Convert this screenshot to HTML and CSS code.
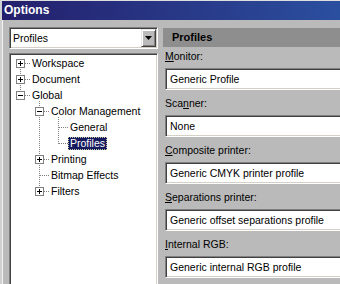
FILE: index.html
```html
<!DOCTYPE html>
<html lang="en">
<head>
  <meta charset="UTF-8">
  <title>Options</title>
  <link rel="stylesheet" href="styles.css">
</head>
<body>
  <div class="window">
    <div class="titlebar">Options</div>

    <div class="main">
      <!-- left: category picker + tree -->
      <div class="sidebar">
        <div class="combo">
          <span class="combo-value">Profiles</span>
          <span class="combo-button"><span class="arrow"></span></span>
        </div>

        <div class="tree">
          <svg class="tree-lines" width="146" height="150" viewBox="0 0 146 150">
            <g stroke="#808080" stroke-width="1" stroke-dasharray="1 1" shape-rendering="crispEdges" fill="none">
              <line x1="9.5" y1="8" x2="9.5" y2="41" />
              <line x1="28.5" y1="46" x2="28.5" y2="137" />
              <line x1="47.5" y1="62" x2="47.5" y2="89" />
              <line x1="14" y1="8.5" x2="19" y2="8.5" />
              <line x1="14" y1="24.5" x2="19" y2="24.5" />
              <line x1="14" y1="40.5" x2="19" y2="40.5" />
              <line x1="33" y1="56.5" x2="38" y2="56.5" />
              <line x1="48" y1="72.5" x2="57" y2="72.5" />
              <line x1="48" y1="88.5" x2="57" y2="88.5" />
              <line x1="33" y1="104.5" x2="38" y2="104.5" />
              <line x1="29" y1="120.5" x2="38" y2="120.5" />
              <line x1="33" y1="136.5" x2="38" y2="136.5" />
            </g>
          </svg>
          <div class="rows">
            <div class="row level-0"><span class="expander plus"></span><span class="label">Workspace</span></div>
            <div class="row level-0"><span class="expander plus"></span><span class="label">Document</span></div>
            <div class="row level-0"><span class="expander"></span><span class="label">Global</span></div>
            <div class="row level-1"><span class="expander"></span><span class="label">Color Management</span></div>
            <div class="row level-2"><span class="leaf"></span><span class="label">General</span></div>
            <div class="row level-2"><span class="leaf"></span><span class="label selected">Profiles</span></div>
            <div class="row level-1"><span class="expander plus"></span><span class="label">Printing</span></div>
            <div class="row level-1"><span class="leaf"></span><span class="label">Bitmap Effects</span></div>
            <div class="row level-1"><span class="expander plus"></span><span class="label">Filters</span></div>
          </div>
        </div>
      </div>

      <!-- right: profile settings -->
      <div class="panel">
        <div class="panel-header">Profiles</div>
        <div class="fields">
          <div class="field-label"><u>M</u>onitor:</div>
          <div class="field">Generic Profile</div>

          <div class="field-label">Sca<u>n</u>ner:</div>
          <div class="field">None</div>

          <div class="field-label"><u>C</u>omposite printer:</div>
          <div class="field">Generic CMYK printer profile</div>

          <div class="field-label"><u>S</u>eparations printer:</div>
          <div class="field">Generic offset separations profile</div>

          <div class="field-label"><u>I</u>nternal RGB:</div>
          <div class="field">Generic internal RGB profile</div>
        </div>
      </div>
    </div>
  </div>
</body>
</html>
```

FILE: styles.css
```css
* {
  margin: 0;
  padding: 0;
  box-sizing: border-box;
}
body {
  width: 340px;
  height: 284px;
  overflow: hidden;
  background-color: #bababa;
  font-family: 'Liberation Sans', Arial, sans-serif;
  font-size: 10.5px;
  color: #000;
}
.window {
  height: 284px;
  border-top: 1px solid #dedede;
  border-left: 2px solid #d0d0d0;
  overflow: hidden;
}
.titlebar {
  height: 19px;
  line-height: 19px;
  padding-left: 2px;
  background: linear-gradient(to right, #241f6c, #2b4f9f);
  color: #fff;
  font-size: 12px;
  font-weight: bold;
}
.main {
  display: flex;
  gap: 5px;
  padding: 7px 0 0 7px;
  box-shadow: inset 1px 0 #f4f4f4;
}
.sidebar {
  flex: none;
  width: 149px;
  display: flex;
  flex-direction: column;
  gap: 4px;
}

/* sunken white boxes */
.combo, .tree, .field {
  background-color: #fff;
  border: 1px solid;
  border-color: #808080 #fff #fff #808080;
  box-shadow: inset 1px 1px #404040, inset -1px -1px #d4d0c8;
}
.combo {
  height: 22px;
  display: flex;
  align-items: center;
  padding: 1px 1px 1px 3px;
}
.combo-value {
  flex: 1;
}
.combo-button {
  width: 15px;
  height: 18px;
  display: flex;
  align-items: center;
  justify-content: center;
  background-color: #bababa;
  border: 1px solid;
  border-color: #e8e8e8 #404040 #404040 #e8e8e8;
  box-shadow: inset 1px 1px #fff, inset -1px -1px #808080;
}
.arrow {
  width: 7px;
  height: 4px;
  background-color: #000;
  clip-path: polygon(0 0, 100% 0, 50% 100%);
}

/* tree view */
.tree {
  position: relative;
  height: 240px;
  padding: 1px 0 0 1px;
}
.tree-lines {
  position: absolute;
  top: 1px;
  left: 1px;
}
.rows {
  position: relative;
}
.row {
  display: flex;
  height: 16px;
}
.level-0 { padding-left: 5px; }
.level-1 { padding-left: 24px; }
.level-2 { padding-left: 43px; }
.expander, .leaf {
  flex: none;
  width: 9px;
  height: 9px;
  margin-top: 4px;
}
.expander {
  position: relative;
  background-color: #fff;
  border: 1px solid #808080;
}
.expander::before {
  content: '';
  position: absolute;
  left: 1px;
  top: 3px;
  width: 5px;
  height: 1px;
  background-color: #000;
}
.expander.plus::after {
  content: '';
  position: absolute;
  left: 3px;
  top: 1px;
  width: 1px;
  height: 5px;
  background-color: #000;
}
.label {
  margin: 2px 0 0 5px;
  padding: 0 2px;
  height: 13px;
  line-height: 13px;
  white-space: nowrap;
}
.label.selected {
  background-color: #161a5e;
  color: #fff;
  outline: 1px dotted #c8c8a0;
  outline-offset: -1px;
}

/* settings panel */
.panel {
  flex: none;
  width: 200px;
}
.panel-header {
  margin-top: 1px;
  height: 19px;
  line-height: 19px;
  padding-left: 9px;
  background-color: #8e8e8e;
  font-size: 11px;
  font-weight: bold;
}
.fields {
  padding: 2px 0 0 2px;
}
.field-label {
  height: 14px;
  line-height: 14px;
  margin-bottom: 5px;
  white-space: nowrap;
}
.field-label u {
  text-decoration-thickness: 1px;
}
.field {
  height: 22px;
  line-height: 20px;
  padding-left: 4px;
  margin-bottom: 6px;
  white-space: nowrap;
}
```
